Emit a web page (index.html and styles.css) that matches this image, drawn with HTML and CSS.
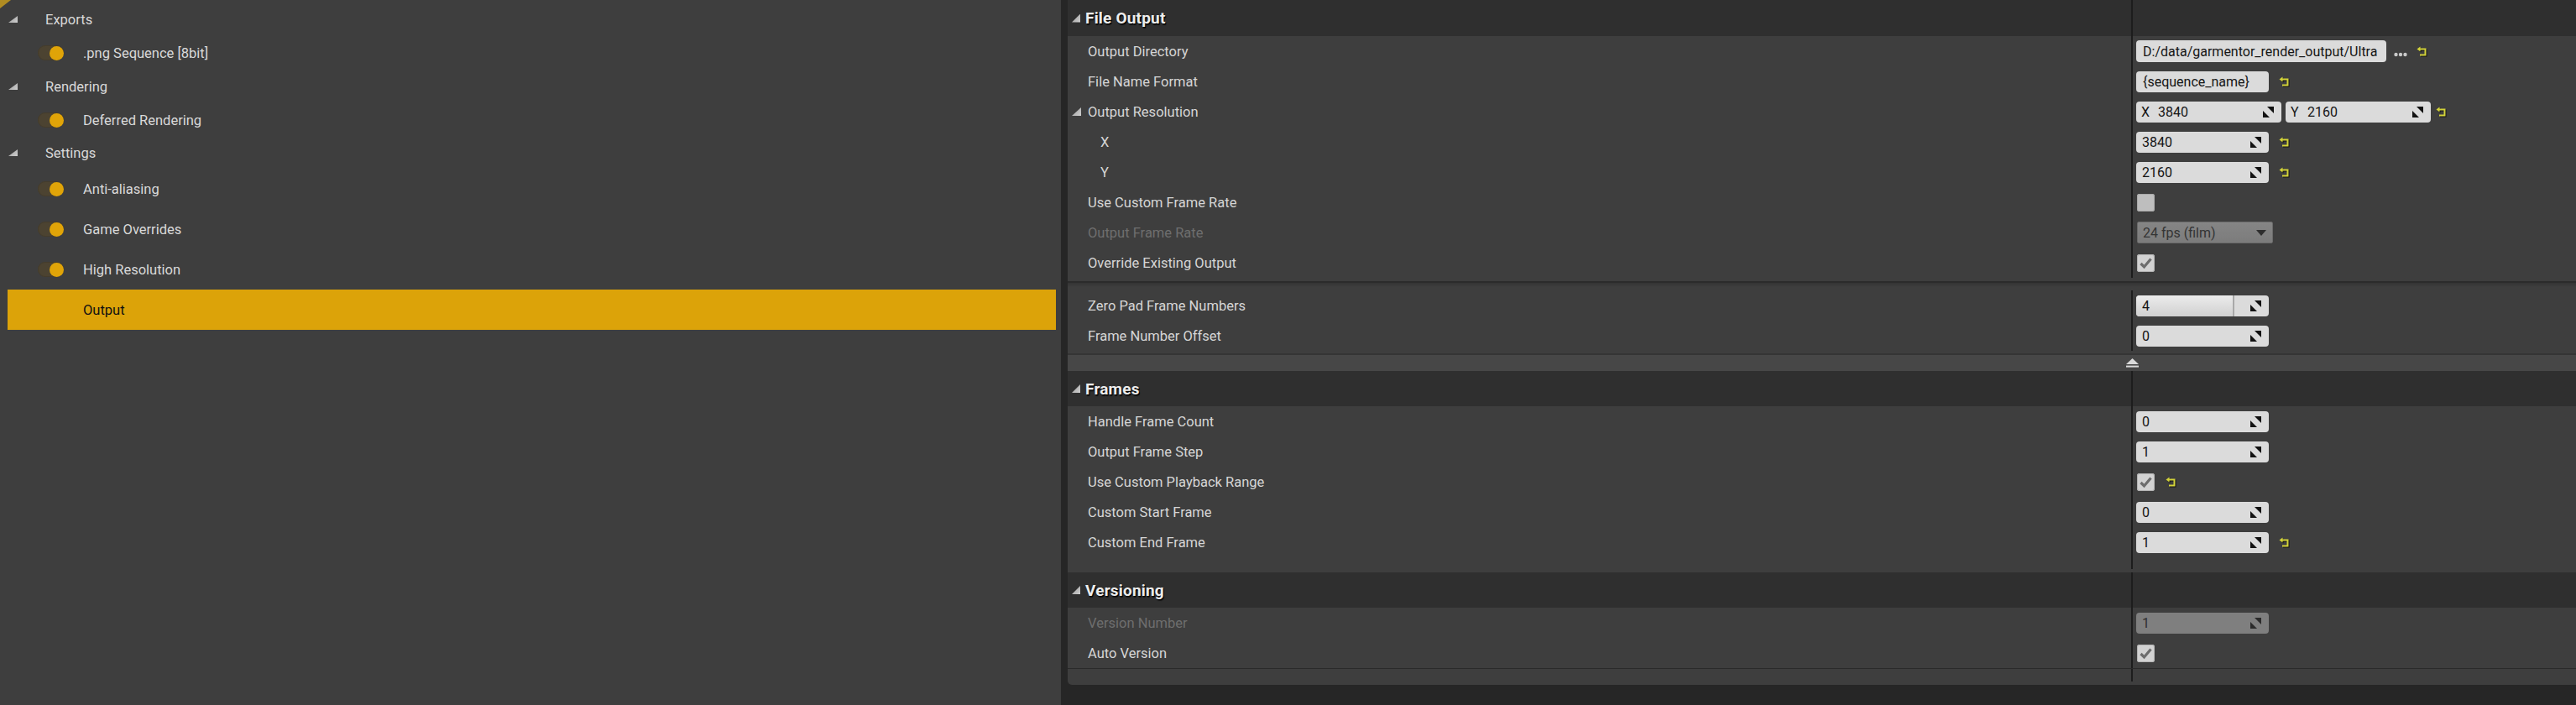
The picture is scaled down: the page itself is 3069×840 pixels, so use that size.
FILE: index.html
```html
<!DOCTYPE html>
<html>
<head>
<meta charset="utf-8">
<link rel="stylesheet" href="styles.css">
</head>
<body>
<svg class="defs" width="0" height="0">
  <defs>
    <symbol id="spin" viewBox="0 0 13 13">
      <polygon points="5,0 13,0 13,8"/>
      <polygon points="0,5 0,13 8,13"/>
    </symbol>
    <symbol id="reset" viewBox="0 0 13 13">
      <path d="M4 3.5 H10.5 V10.5 H4" fill="none" stroke="#d3d33a" stroke-width="2"/>
      <path d="M0.5 3.5 L4.5 0.5 V6.5 Z" fill="#d3d33a"/>
    </symbol>
    <symbol id="check" viewBox="0 0 21 21">
      <path d="M4.5 11 L8.5 15 L16.5 5.5" fill="none" stroke="#6c6c6c" stroke-width="3.2"/>
    </symbol>
  </defs>
</svg>
<div class="app">
  <aside class="tree">
    <div class="corner"></div>
    <div class="tree-row head"><span class="tri"></span><span class="tlabel">Exports</span></div>
    <div class="tree-row item"><span class="toggle"><span class="knob"></span></span><span class="tlabel">.png Sequence [8bit]</span></div>
    <div class="tree-row head"><span class="tri"></span><span class="tlabel">Rendering</span></div>
    <div class="tree-row item"><span class="toggle"><span class="knob"></span></span><span class="tlabel">Deferred Rendering</span></div>
    <div class="tree-row head short"><span class="tri"></span><span class="tlabel">Settings</span></div>
    <div class="tree-row item tall"><span class="toggle"><span class="knob"></span></span><span class="tlabel">Anti-aliasing</span></div>
    <div class="tree-row item tall"><span class="toggle"><span class="knob"></span></span><span class="tlabel">Game Overrides</span></div>
    <div class="tree-row item tall"><span class="toggle"><span class="knob"></span></span><span class="tlabel">High Resolution</span></div>
    <div class="tree-row item tall selected"><span class="tlabel">Output</span></div>
  </aside>
  <div class="gutter"></div>
  <main class="details">
    <section class="cat">
      <div class="cat-head first"><div class="name"><span class="tri small"></span><span class="title">File Output</span></div><div class="vline"></div><div></div></div>
      <div class="prop"><div class="label">Output Directory</div><div class="vline"></div>
        <div class="value"><div class="box text wide">D:/data/garmentor_render_output/Ultra</div>
          <svg class="dots" width="16" height="6" viewBox="0 0 16 6"><circle cx="2.5" cy="3" r="2.2"/><circle cx="8" cy="3" r="2.2"/><circle cx="13.5" cy="3" r="2.2"/></svg>
          <svg class="reset r-dots"><use href="#reset"/></svg></div></div>
      <div class="prop"><div class="label">File Name Format</div><div class="vline"></div>
        <div class="value"><div class="box text">{sequence_name}</div><svg class="reset"><use href="#reset"/></svg></div></div>
      <div class="prop"><div class="label"><span class="tri small inline"></span>Output Resolution</div><div class="vline"></div>
        <div class="value"><div class="box num half"><span class="axis">X</span><span class="v">3840</span><svg class="spin"><use href="#spin"/></svg></div>
          <div class="box num half"><span class="axis">Y</span><span class="v">2160</span><svg class="spin"><use href="#spin"/></svg></div>
          <svg class="reset r-near"><use href="#reset"/></svg></div></div>
      <div class="prop"><div class="label sub">X</div><div class="vline"></div>
        <div class="value"><div class="box num"><span class="v">3840</span><svg class="spin"><use href="#spin"/></svg></div><svg class="reset"><use href="#reset"/></svg></div></div>
      <div class="prop"><div class="label sub">Y</div><div class="vline"></div>
        <div class="value"><div class="box num"><span class="v">2160</span><svg class="spin"><use href="#spin"/></svg></div><svg class="reset"><use href="#reset"/></svg></div></div>
      <div class="prop"><div class="label">Use Custom Frame Rate</div><div class="vline"></div>
        <div class="value"><div class="checkbox"></div></div></div>
      <div class="prop"><div class="label disabled">Output Frame Rate</div><div class="vline"></div>
        <div class="value"><div class="combo"><span>24 fps (film)</span><svg class="arrow" width="12" height="7" viewBox="0 0 12 7"><polygon points="0,0 12,0 6,7"/></svg></div></div></div>
      <div class="prop"><div class="label">Override Existing Output</div><div class="vline"></div>
        <div class="value"><div class="checkbox checked"><svg width="21" height="21"><use href="#check"/></svg></div></div></div>
      <div class="adv-sep"></div>
      <div class="prop"><div class="label">Zero Pad Frame Numbers</div><div class="vline"></div>
        <div class="value"><div class="box num slider"><span class="fill" style="width:117px">4</span><svg class="spin"><use href="#spin"/></svg></div></div></div>
      <div class="prop"><div class="label">Frame Number Offset</div><div class="vline"></div>
        <div class="value"><div class="box num"><span class="v">0</span><svg class="spin"><use href="#spin"/></svg></div></div></div>
      <div class="adv-bar"><svg width="15" height="11" viewBox="0 0 15 11"><polygon points="7.5,0 15,7 0,7" fill="#dadada"/><rect y="8.6" width="15" height="2" fill="#dadada"/></svg></div>
    </section>
    <section class="cat">
      <div class="cat-head"><div class="name"><span class="tri small"></span><span class="title">Frames</span></div><div class="vline"></div><div></div></div>
      <div class="prop"><div class="label">Handle Frame Count</div><div class="vline"></div>
        <div class="value"><div class="box num"><span class="v">0</span><svg class="spin"><use href="#spin"/></svg></div></div></div>
      <div class="prop"><div class="label">Output Frame Step</div><div class="vline"></div>
        <div class="value"><div class="box num"><span class="v">1</span><svg class="spin"><use href="#spin"/></svg></div></div></div>
      <div class="prop"><div class="label">Use Custom Playback Range</div><div class="vline"></div>
        <div class="value"><div class="checkbox checked"><svg width="21" height="21"><use href="#check"/></svg></div><svg class="reset r-check"><use href="#reset"/></svg></div></div>
      <div class="prop"><div class="label">Custom Start Frame</div><div class="vline"></div>
        <div class="value"><div class="box num"><span class="v">0</span><svg class="spin"><use href="#spin"/></svg></div></div></div>
      <div class="prop"><div class="label">Custom End Frame</div><div class="vline"></div>
        <div class="value"><div class="box num"><span class="v">1</span><svg class="spin"><use href="#spin"/></svg></div><svg class="reset"><use href="#reset"/></svg></div></div>
      <div class="cat-foot"><div></div><div class="vline"></div><div></div></div>
    </section>
    <section class="cat last">
      <div class="cat-head"><div class="name"><span class="tri small"></span><span class="title">Versioning</span></div><div class="vline"></div><div></div></div>
      <div class="prop"><div class="label disabled">Version Number</div><div class="vline"></div>
        <div class="value"><div class="box num off"><span class="v">1</span><svg class="spin"><use href="#spin"/></svg></div></div></div>
      <div class="prop"><div class="label">Auto Version</div><div class="vline"></div>
        <div class="value"><div class="checkbox checked"><svg width="21" height="21"><use href="#check"/></svg></div></div></div>
      <div class="cat-end"><div></div><div class="vline"></div><div></div></div>
    </section>
  </main>
</div>
</body>
</html>
```
FILE: styles.css
```css
* { box-sizing: border-box; margin: 0; padding: 0; }
html, body { width: 3069px; height: 840px; overflow: hidden; }
body {
  background: #262626;
  font-family: Roboto, "Noto Sans", sans-serif;
}
.defs { position: absolute; width: 0; height: 0; }

.app { display: flex; height: 840px; align-items: flex-start; }

/* ---------- left tree ---------- */
.tree {
  flex: none;
  width: 1264px;
  height: 840px;
  background: #3e3e3e;
  padding-top: 3px;
  position: relative;
}
.corner {
  position: absolute;
  left: 0; top: 0;
  width: 13px; height: 10px;
  background: #b08c22;
  clip-path: polygon(0 0, 100% 0, 0 100%);
}
.tree-row {
  display: flex;
  align-items: center;
  height: 40px;
  color: #d9d9d9;
  font-size: 16.5px;
}
.tree-row.short { height: 38px; }
.tree-row.tall { height: 48px; }
.tree-row.head { padding-left: 10px; }
.tree-row.head .tlabel { margin-left: 33px; }
.tree-row.item { padding-left: 45px; }
.tree-row.item .tlabel { margin-left: 23px; }
.tree-row.selected {
  background: #dca309;
  color: #111;
  margin: 0 6px 0 9px;
  padding-left: 90px;
}
.tree-row.selected .tlabel { margin-left: 0; }

.tri {
  display: inline-block;
  flex: none;
  width: 11px; height: 8px;
  background: linear-gradient(135deg, #9a9a9a, #cfcfcf);
  clip-path: polygon(100% 0, 100% 100%, 0 100%);
}
.tri.small { width: 10px; height: 10px; }

.toggle {
  flex: none;
  width: 31px; height: 18px;
  border-radius: 9px;
  background: #4c4331;
  box-shadow: inset 0 0 0 1px #443c2c;
  display: flex;
  justify-content: flex-end;
}
.knob {
  width: 17px; height: 17px;
  margin-top: 0.5px;
  border-radius: 50%;
  background: #e0a408;
}

/* ---------- gutter ---------- */
.gutter { flex: none; width: 8px; height: 840px; background: #262626; }

/* ---------- details ---------- */
.details {
  flex: 1;
  background: #3e3e3e;
  border-bottom-left-radius: 5px;
  display: flex;
  flex-direction: column;
  color: #d6d6d6;
}
.cat-head, .prop, .cat-foot, .cat-end {
  display: grid;
  grid-template-columns: 1267px 2px 1fr;
}
.vline { background: #1d1d1d; }
.cat-head {
  height: 42px;
  background: #2f2f2f;
}
.cat-head.first { height: 43px; }
.cat-head .name {
  display: flex;
  align-items: center;
  padding-left: 5px;
}
.cat-head .title {
  margin-left: 6px;
  font-size: 19px;
  font-weight: 700;
  letter-spacing: 0.2px;
  color: #ededed;
  text-shadow: 1px 1px 0 #000, 1px 2px 1px rgba(0,0,0,.6);
}

.prop { height: 36px; }
.label {
  display: flex;
  align-items: center;
  padding-left: 24px;
  font-size: 16.5px;
  color: #d6d6d6;
  white-space: nowrap;
}
.label.sub { padding-left: 39px; }
.label.disabled { color: #6e6e6e; }
.tri.inline { width: 11px; height: 10px; margin-left: -19px; margin-right: 8px; }

.value {
  display: flex;
  align-items: center;
  padding-left: 4px;
}
.box {
  height: 25px;
  border-radius: 4px;
  background: #dbdbdb;
  color: #151515;
  font-size: 16px;
  display: flex;
  align-items: center;
  flex: none;
}
.box.text { width: 158px; padding-left: 8px; }
.box.text.wide { width: 298px; height: 26px; }
.box.num { width: 158px; padding-left: 7px; padding-right: 9px; }
.box.num.half { width: 173px; padding-left: 6px; }
.box.num.half + .box.num.half { margin-left: 5px; }
.box .axis { width: 20px; }
.box .v { flex: 1; }
.spin { width: 13px; height: 13px; fill: #121212; flex: none; }
.box.off { background: #7f7f7f; color: #2e2e2e; }
.box.off .spin { fill: #2b2b2b; }

.box.slider { padding-left: 0; }
.box.slider .fill {
  height: 100%;
  display: flex;
  align-items: center;
  padding-left: 7px;
  border-radius: 4px 0 0 4px;
  background: linear-gradient(#ececec, #d0d0d0);
  box-shadow: inset -2px 0 0 #a9a9a9;
}
.box.slider .spin { margin-left: auto; }

.dots { margin-left: 9px; fill: #c9c9c9; margin-top: 8px; }
.reset {
  width: 13px; height: 13px;
  margin-left: 12px;
  filter: drop-shadow(1px 1px 0 #111);
  flex: none;
}
.reset.r-dots { margin-left: 11px; }
.reset.r-near { margin-left: 6px; }
.reset.r-check { margin-left: 13px; }

.checkbox {
  width: 21px; height: 21px;
  margin-left: 1px;
  border-radius: 3px;
  background: #bebebe;
  box-shadow: inset 0 0 0 1px #aaaaaa;
  flex: none;
}
.checkbox.checked { background: #d2d2d2; box-shadow: inset 0 0 0 1px #b4b4b4; }
.checkbox svg { display: block; }

.combo {
  width: 162px; height: 26px;
  margin-left: 1px;
  background: linear-gradient(#858585, #7c7c7c);
  border: 1px solid #6a6a6a;
  border-radius: 2px;
  display: flex;
  align-items: center;
  padding-left: 6px;
  padding-right: 7px;
  font-size: 16px;
  color: #343434;
}
.combo span { flex: 1; }
.combo .arrow { fill: #2e2e2e; }

.adv-sep {
  margin-top: 4px;
  height: 11px;
  border-top: 2px solid #2b2b2b;
  background: linear-gradient(#343434, #3e3e3e 5px);
}
.adv-bar {
  margin-top: 3px;
  height: 21px;
  border-top: 2px solid #353535;
  background: #474747;
  display: flex;
  align-items: center;
  padding-left: 1261px;
}
.cat-foot { height: 18px; }
.cat-foot .vline { margin-bottom: 4px; }
.cat-end {
  height: 20px;
  border-top: 1px solid #2a2a2a;
}
.cat-end .vline { margin-bottom: 4px; }
```
